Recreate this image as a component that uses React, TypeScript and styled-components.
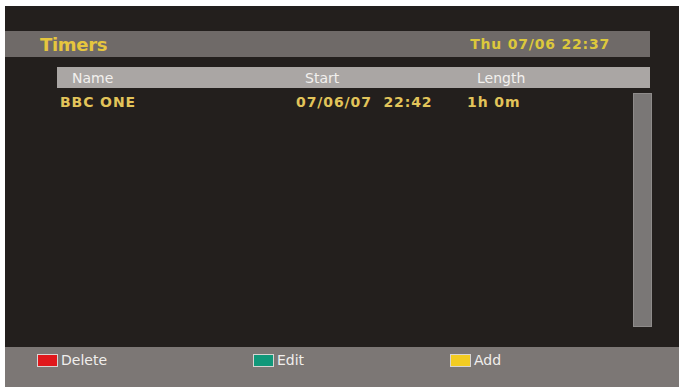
import React from 'react';
import styled, { createGlobalStyle } from 'styled-components';

const GlobalStyle = createGlobalStyle`
    body {
        margin: 0;
        background: #ffffff;
        font-family: "DejaVu Sans", "Liberation Sans", sans-serif;
    }
`;

const timers = [
    { name: "BBC ONE", start: "07/06/07\u00a0\u00a022:42", length: "1h 0m" },
];

const keys = [
    { color: "#e0181c", label: "Delete", width: 216 },
    { color: "#11987a", label: "Edit", width: 197 },
    { color: "#f3cc22", label: "Add", width: 120 },
];

const App = () => {
    return (
        <>
            <GlobalStyle />
            <Screen>
                <TitleBar>
                    <Title>Timers</Title>
                    <Clock>Thu 07/06 22:37</Clock>
                </TitleBar>

                <ListArea>
                    <ColumnHeader>
                        <span>Name</span>
                        <span>Start</span>
                        <span>Length</span>
                    </ColumnHeader>
                    <ListBody>
                        <Rows>
                            {timers.map((t) => (
                                <Row key={t.name}>
                                    <span>{t.name}</span>
                                    <span>{t.start}</span>
                                    <span>{t.length}</span>
                                </Row>
                            ))}
                        </Rows>
                        <ScrollBar />
                    </ListBody>
                </ListArea>

                <Footer>
                    {keys.map((k) => (
                        <KeyItem key={k.label} $width={k.width}>
                            <Swatch $color={k.color} />
                            <span>{k.label}</span>
                        </KeyItem>
                    ))}
                </Footer>
            </Screen>
        </>
    );
};

const Screen = styled.div`
    margin: 6px 0 0 5px;
    width: 674px;
    height: 381px;
    background: #231f1d;
    display: flex;
    flex-direction: column;
`;

const TitleBar = styled.div`
    margin: 25px 29px 0 0;
    height: 26px;
    background: #6f6a68;
    display: flex;
    align-items: center;
    justify-content: space-between;
    padding: 0 40px 0 35px;
`;

const Title = styled.h1`
    margin: 0;
    font-size: 18px;
    font-weight: bold;
    color: #e6c63e;
    letter-spacing: -0.3px;
`;

const Clock = styled.div`
    font-size: 14px;
    font-weight: bold;
    color: #dcc83c;
    letter-spacing: 0.8px;
`;

const ListArea = styled.div`
    flex: 1;
    margin: 10px 27px 0 52px;
    display: flex;
    flex-direction: column;
`;

const ColumnHeader = styled.div`
    height: 21px;
    margin-right: 2px;
    background: #aaa6a4;
    color: #f2f0ee;
    font-size: 14px;
    display: grid;
    grid-template-columns: 233px 172px 1fr;
    align-items: center;
    padding-left: 15px;
`;

const ListBody = styled.div`
    flex: 1;
    display: flex;
    padding-bottom: 20px;
`;

const Rows = styled.div`
    flex: 1;
`;

const Row = styled.div`
    display: grid;
    grid-template-columns: 236px 171px 1fr;
    align-items: center;
    height: 28px;
    padding-left: 3px;
    font-size: 14px;
    font-weight: bold;
    color: #e2c45a;
    letter-spacing: 0.9px;
`;

const ScrollBar = styled.div`
    box-sizing: border-box;
    width: 19px;
    margin-top: 5px;
    background: #7a7776;
    border: 1px solid #8e8b8a;
`;

const Footer = styled.div`
    height: 40px;
    background: #7c7775;
    display: flex;
    align-items: flex-start;
    padding: 5px 0 0 32px;
    box-sizing: border-box;
`;

const KeyItem = styled.div<{ $width: number }>`
    width: ${(props) => props.$width}px;
    display: flex;
    align-items: center;
    gap: 3px;
    color: #f0eeec;
    font-size: 14px;
`;

const Swatch = styled.div<{ $color: string }>`
    width: 19px;
    height: 11px;
    background: ${(props) => props.$color};
    border: 1px solid #d8d4d2;
`;

export default App;
